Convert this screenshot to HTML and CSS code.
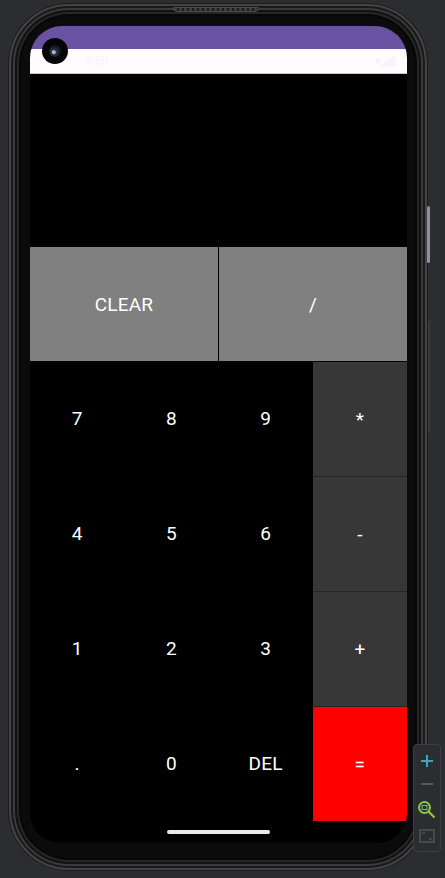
FILE: index.html
```html
<!DOCTYPE html>
<html>
<head>
<meta charset="utf-8">
<link rel="stylesheet" href="styles.css">
</head>
<body>
<div class="stage">
  <div class="phone">
    <div class="speaker"></div>
    <div class="side-btn power"></div>
    <div class="side-btn volume"></div>
    <div class="screen">
      <div class="camera"><div class="lens"></div></div>
      <div class="topbar"></div>
      <div class="statusbar">
        <span class="time">3:50</span>
        <span class="sicons">▾◢▮</span>
      </div>
      <div class="display"></div>
      <div class="toprow">
        <div class="key gray">CLEAR</div>
        <div class="key gray">/</div>
      </div>
      <div class="pad">
        <div class="digits">
          <div class="key">7</div><div class="key">8</div><div class="key">9</div>
          <div class="key">4</div><div class="key">5</div><div class="key">6</div>
          <div class="key">1</div><div class="key">2</div><div class="key">3</div>
          <div class="key">.</div><div class="key">0</div><div class="key">DEL</div>
        </div>
        <div class="ops">
          <div class="key dark">*</div>
          <div class="key dark">-</div>
          <div class="key dark">+</div>
          <div class="key red">=</div>
        </div>
      </div>
      <div class="navarea"><div class="homebar"></div></div>
    </div>
  </div>
  <div class="zoomctl">
    <svg width="14" height="14" viewBox="0 0 14 14"><path d="M7 1v12M1 7h12" stroke="#3aa6b9" stroke-width="2"/></svg>
    <svg width="14" height="14" viewBox="0 0 14 14"><path d="M1 7h12" stroke="#55575b" stroke-width="2"/></svg>
    <svg width="20" height="20" viewBox="0 0 20 20"><circle cx="7.5" cy="7.5" r="5.5" fill="none" stroke="#8ac64c" stroke-width="2"/><path d="M11.5 11.5l6 6" stroke="#8ac64c" stroke-width="2.2"/><rect x="5" y="5.5" width="5" height="4" fill="none" stroke="#8ac64c" stroke-width="1"/></svg>
    <svg width="16" height="14" viewBox="0 0 16 14"><rect x="1" y="1" width="14" height="12" fill="none" stroke="#5a5c60" stroke-width="1.2"/><path d="M4 5V4h2M12 9v1h-2" stroke="#5a5c60" stroke-width="1.2" fill="none"/></svg>
  </div>
</div>
</body>
</html>
```
FILE: styles.css
```css
* { box-sizing: border-box; }
html, body { margin: 0; padding: 0; }
body {
  background: #2b2d30;
  width: 445px;
  height: 878px;
  overflow: hidden;
  font-family: Roboto, "Noto Sans", sans-serif;
}
.stage {
  position: relative;
  width: 445px;
  height: 878px;
  padding: 4px 0 0 9px;
}
.phone {
  position: relative;
  width: 418px;
  height: 866px;
  border-radius: 60px;
  background: #0b0b0b;
  border: 2px solid #444;
  box-shadow: 0 0 0 1px #1b1b1c, inset 0 0 0 2px #1a1a1a, inset 0 0 0 4px #3a3a3a, inset 0 0 0 6px #121212, inset 0 0 0 8px #262626, inset 0 0 0 10px #070707;
  padding: 20px 17px 0 19px;
}
.speaker {
  position: absolute;
  left: 162px;
  top: 1px;
  width: 86px;
  height: 5px;
  border-radius: 0 0 4px 4px;
  background: repeating-linear-gradient(90deg, #3c3c3c 0 3px, #1e1e1e 3px 5px);
  border: 1px solid #4a4a4a;
}
.side-btn {
  position: absolute;
  right: -5px;
  width: 3px;
  border-radius: 2px;
}
.power { top: 200px; height: 57px; background: #8e8fa0; }
.volume { top: 315px; height: 112px; background: #3a3b3f; width: 2px; }
.screen {
  position: relative;
  width: 377px;
  height: 817px;
  border-radius: 32px 32px 30px 30px;
  overflow: hidden;
  background: #000;
  display: flex;
  flex-direction: column;
}
.camera {
  position: absolute;
  left: 12px;
  top: 12px;
  width: 26px;
  height: 26px;
  border-radius: 50%;
  background: #050505;
  display: flex;
  align-items: center;
  justify-content: center;
}
.lens {
  width: 12px;
  height: 12px;
  border-radius: 50%;
  background: radial-gradient(circle at 40% 60%, #a7b4d6 0 1.5px, #2c3447 2.5px, #151820 6px);
}
.topbar { height: 23px; background: #6a52a3; flex: none; }
.statusbar {
  height: 25px;
  flex: none;
  background: #fffbff;
  border-bottom: 1px solid #c9c6cc;
  display: flex;
  align-items: center;
  justify-content: space-between;
  padding: 0 10px 0 55px;
  font-size: 12px;
  color: #f7f3f9;
}
.display { height: 173px; flex: none; }
.toprow {
  display: flex;
  gap: 1px;
  height: 114px;
  flex: none;
}
.toprow .key { flex: 1; }
.pad {
  display: flex;
  height: 460px;
  flex: none;
}
.digits {
  flex: 3;
  display: grid;
  grid-template-columns: repeat(3, 1fr);
  grid-template-rows: repeat(4, 1fr);
}
.ops {
  flex: 1;
  display: flex;
  flex-direction: column;
  gap: 1px;
  padding-top: 1px;
  background: #000;
}
.ops .key { flex: 1; }
.key {
  display: flex;
  align-items: center;
  justify-content: center;
  color: #fff;
  font-size: 19px;
  letter-spacing: 0.2px;
}
.gray { background: #808080; }
.dark { background: #373737; box-shadow: 0 1px 0 #262626; }
.red { background: #ff0000; }
.navarea {
  flex: 1;
  display: flex;
  justify-content: center;
  padding-top: 9px;
}
.homebar {
  width: 103px;
  height: 4px;
  border-radius: 2px;
  background: #e9e9e9;
}
.zoomctl {
  position: absolute;
  left: 413px;
  top: 744px;
  width: 28px;
  height: 108px;
  border: 1px solid #3d3f43;
  border-radius: 4px;
  background: #2b2d30;
  display: flex;
  flex-direction: column;
  align-items: center;
  justify-content: space-around;
  padding: 4px 0;
}
```
